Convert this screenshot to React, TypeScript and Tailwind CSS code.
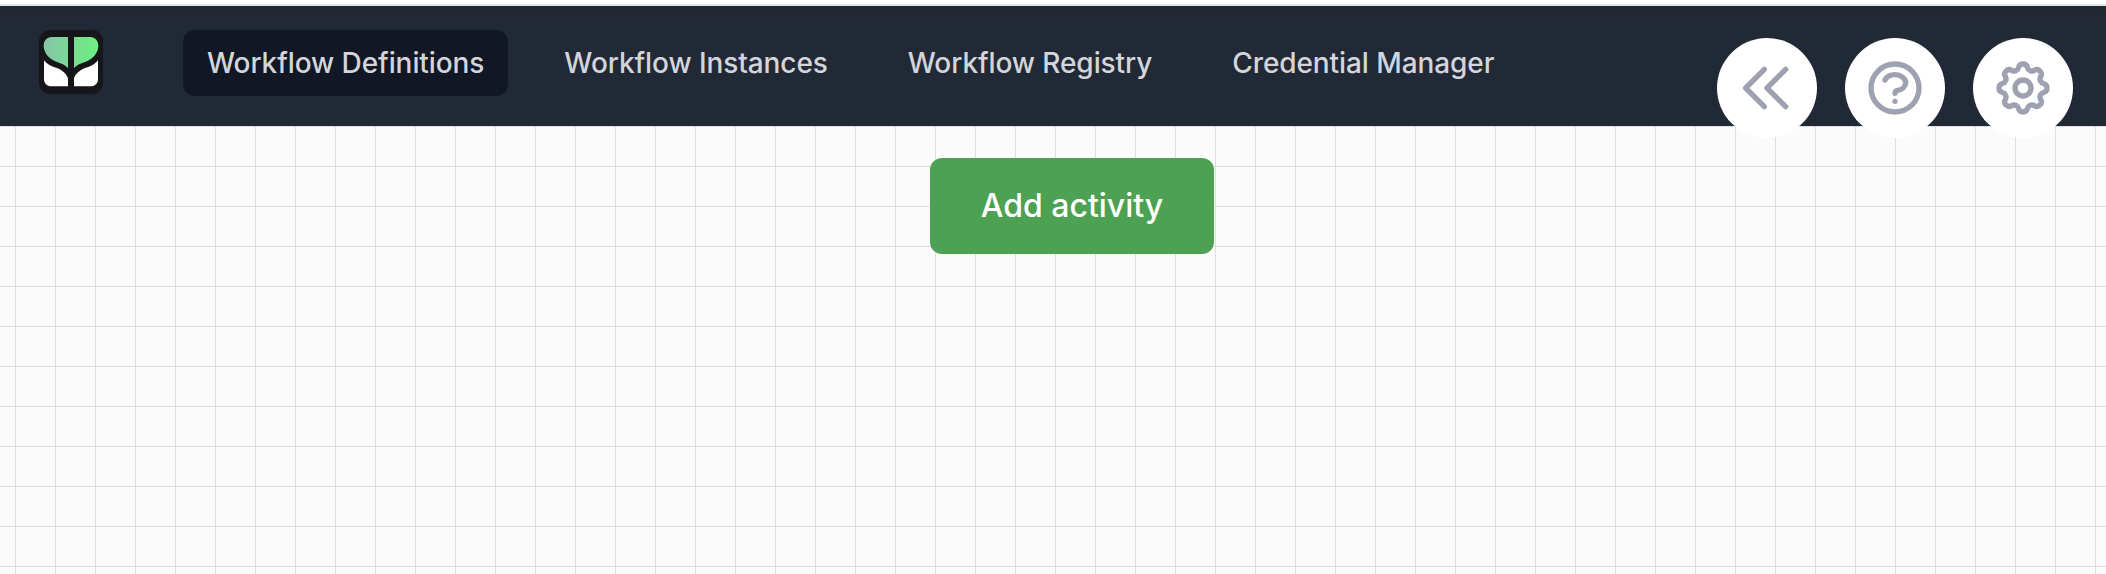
import React from "react";

const links = ["Workflow Definitions", "Workflow Instances", "Workflow Registry", "Credential Manager"];

const actions = [
  { label: "Collapse panel", paths: ["M11 19l-7-7 7-7m8 14l-7-7 7-7"] },
  {
    label: "Help",
    paths: [
      "M8.228 9c.549-1.165 2.03-2 3.772-2 2.21 0 4 1.343 4 3 0 1.4-1.278 2.575-3.006 2.907-.542.104-.994.54-.994 1.093m0 3h.01M21 12a9 9 0 11-18 0 9 9 0 0118 0z",
    ],
  },
  {
    label: "Settings",
    paths: [
      "M10.325 4.317c.426-1.756 2.924-1.756 3.35 0a1.724 1.724 0 002.573 1.066c1.543-.94 3.31.826 2.37 2.37a1.724 1.724 0 001.065 2.572c1.756.426 1.756 2.924 0 3.35a1.724 1.724 0 00-1.066 2.573c.94 1.543-.826 3.31-2.37 2.37a1.724 1.724 0 00-2.572 1.065c-.426 1.756-2.924 1.756-3.35 0a1.724 1.724 0 00-2.573-1.066c-1.543.94-3.31-.826-2.37-2.37a1.724 1.724 0 00-1.065-2.572c-1.756-.426-1.756-2.924 0-3.35a1.724 1.724 0 001.066-2.573c-.94-1.543.826-3.31 2.37-2.37.996.608 2.296.07 2.572-1.065z",
      "M15 12a3 3 0 11-6 0 3 3 0 016 0z",
    ],
  },
];

function Logo() {
  return (
    <svg className="size-16 shrink-0" viewBox="0 0 192 192">
      <defs>
        <linearGradient id="leaf" gradientUnits="userSpaceOnUse" x1="14" y1="0" x2="178" y2="0">
          <stop offset="0" stopColor="#86c5a4" />
          <stop offset="1" stopColor="#6df083" />
        </linearGradient>
      </defs>
      <rect width="192" height="192" rx="34" fill="#141619" />
      <path fill="url(#leaf)" d="M87 21H38C24 21 14 33 14 47c0 21 16 40 40 49 14 4 26 11 33 18Z" />
      <path fill="#fff" d="M15 91c8 10 17 15 29 20 22 6 38 18 43 34V169H37C24 169 15 160 15 147Z" />
      <path fill="url(#leaf)" d="M105 21H154C168 21 178 33 178 47c0 21-16 40-40 49-14 4-26 11-33 18Z" />
      <path fill="#fff" d="M177 91c-8 10-17 15-29 20-22 6-38 18-43 34V169H155C168 169 177 160 177 147Z" />
    </svg>
  );
}

export default function App() {
  return (
    <div className="flex h-[574px] w-full flex-col overflow-hidden bg-white pt-1 font-['Inter',sans-serif]">
      <nav className="relative z-10 flex h-[122px] shrink-0 items-start border-t-2 border-[#e5e7e9] bg-[#222936] bg-[linear-gradient(to_bottom,#22262e,#222936_16px)] pt-6 pr-[33px] pl-[39px]">
        <Logo />
        <div className="ml-20 flex gap-8">
          {links.map((label, i) => (
            <a
              key={label}
              className={`flex h-[66px] items-center rounded-xl px-6 text-[28px] leading-10 font-medium tracking-[-0.085px] whitespace-nowrap text-[#d3d5db] ${i === 0 ? "bg-[#111724]" : ""}`}
            >
              {label}
            </a>
          ))}
        </div>
        <div className="mt-2 ml-auto flex gap-7">
          {actions.map(({ label, paths }) => (
            <button key={label} aria-label={label} className="flex size-[100px] items-center justify-center rounded-full bg-white text-[#9ea2b0]">
              <svg className="size-16" viewBox="0 0 24 24" fill="none" stroke="currentColor" strokeWidth="2" strokeLinecap="round" strokeLinejoin="round">
                {paths.map((d) => (
                  <path key={d} d={d} />
                ))}
              </svg>
            </button>
          ))}
        </div>
      </nav>
      <main className="flex flex-1 items-start bg-[#fbfbfb] bg-[linear-gradient(to_right,#dedede_1px,transparent_1px),linear-gradient(to_bottom,#dedede_1px,transparent_1px)] bg-size-[40px_40px] bg-position-[15px_0px] pt-8 pl-[930px]">
        <button className="flex h-24 w-[284px] items-center justify-center rounded-xl bg-[#4da153] text-[32px] font-medium text-white">
          Add activity
        </button>
      </main>
    </div>
  );
}
